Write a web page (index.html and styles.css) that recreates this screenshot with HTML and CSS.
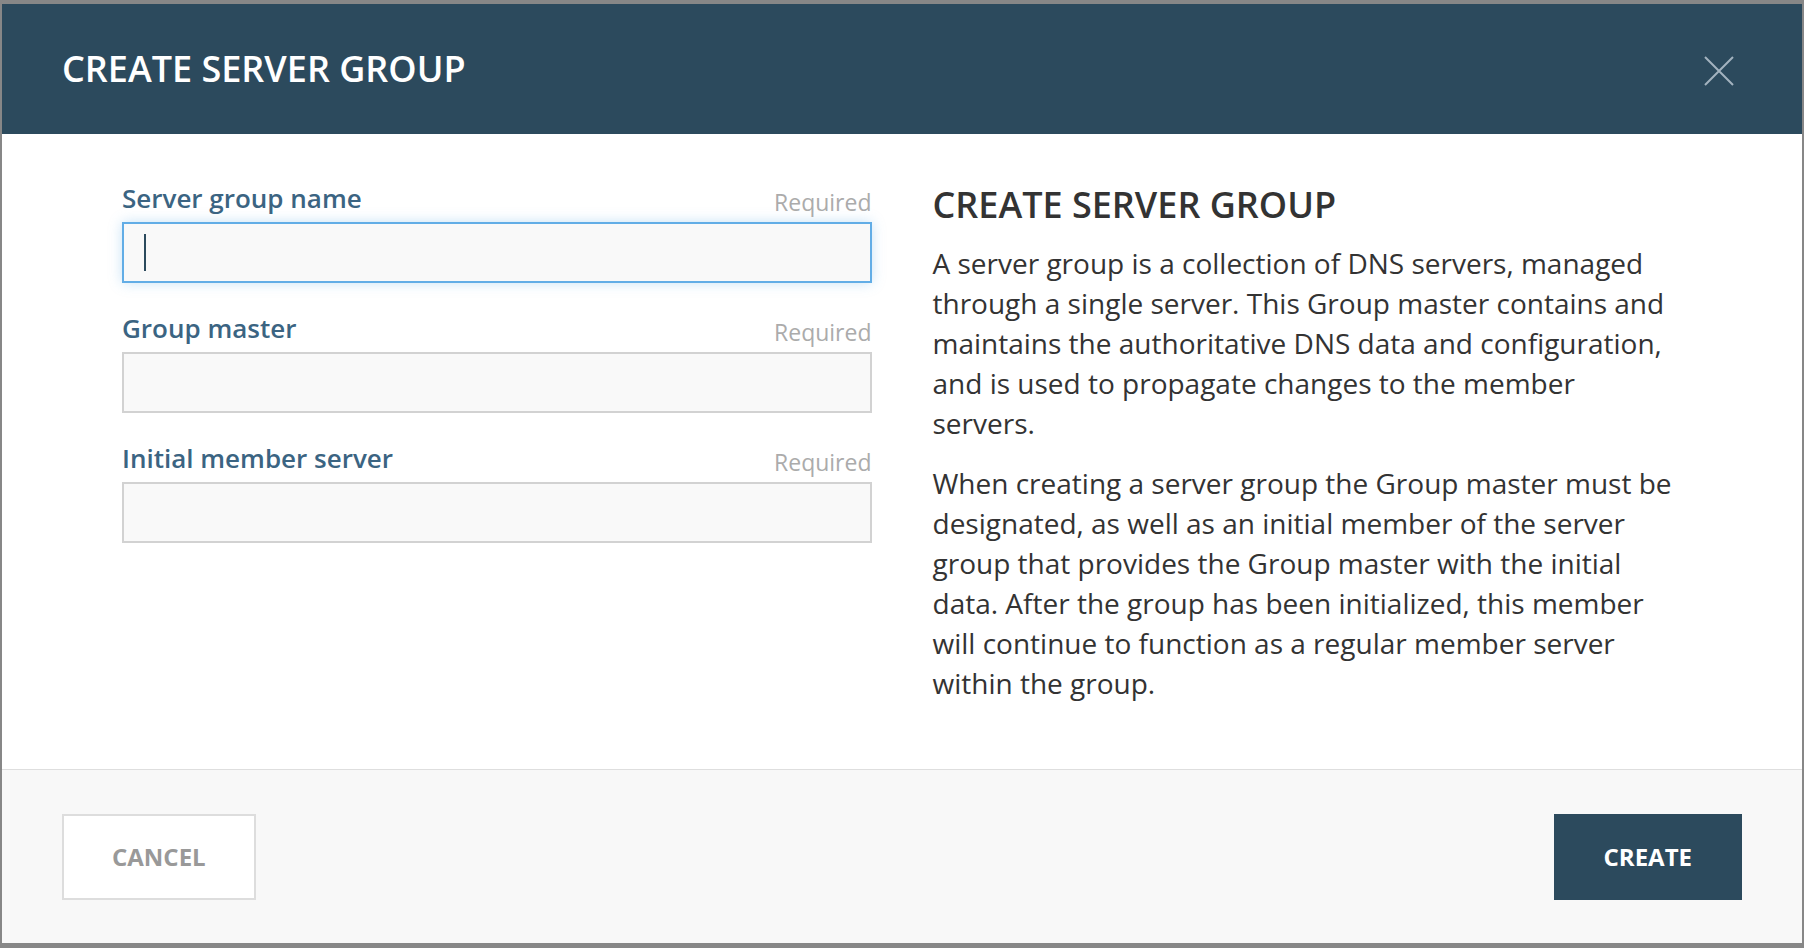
FILE: index.html
```html
<!DOCTYPE html>
<html lang="en">
<head>
<meta charset="utf-8">
<title>Create server group</title>
<link rel="stylesheet" href="styles.css">
</head>
<body>
<div class="modal">
  <header class="modal-header">
    <h1 class="modal-title">CREATE SERVER GROUP</h1>
    <button class="close-btn" aria-label="Close">
      <svg width="30" height="30" viewBox="0 0 30 30"><path d="M1 1 L29 29 M29 1 L1 29" stroke="#a3b3bf" stroke-width="2" fill="none"/></svg>
    </button>
  </header>
  <main class="modal-body">
    <form class="form-col">
      <div class="field">
        <div class="field-head"><label class="field-label">Server group name</label><span class="field-req">Required</span></div>
        <div class="field-input focused"><span class="caret"></span></div>
      </div>
      <div class="field">
        <div class="field-head"><label class="field-label">Group master</label><span class="field-req">Required</span></div>
        <div class="field-input"></div>
      </div>
      <div class="field">
        <div class="field-head"><label class="field-label">Initial member server</label><span class="field-req">Required</span></div>
        <div class="field-input"></div>
      </div>
    </form>
    <section class="help-col">
      <h2 class="help-title">CREATE SERVER GROUP</h2>
      <p class="help-text">A server group is a collection of DNS servers, managed through a single server. This Group master contains and maintains the authoritative DNS data and configuration, and is used to propagate changes to the member servers.</p>
      <p class="help-text">When creating a server group the Group master must be designated, as well as an initial member of the server group that provides the Group master with the initial data. After the group has been initialized, this member will continue to function as a regular member server within the group.</p>
    </section>
  </main>
  <footer class="modal-footer">
    <button class="btn btn-cancel">CANCEL</button>
    <button class="btn btn-create">CREATE</button>
  </footer>
</div>
</body>
</html>
```
FILE: styles.css
```css
html, body {
  margin: 0;
  padding: 0;
}
body {
  background: #878787;
  height: 948px;
  font-family: "Open Sans", "Noto Sans", sans-serif;
  overflow: hidden;
}
.modal {
  margin: 4px 2px 0 2px;
  height: 939px;
  background: #ffffff;
  display: flex;
  flex-direction: column;
}
.modal-header {
  height: 130px;
  flex: none;
  background: #2c4a5d;
  display: flex;
  align-items: center;
  justify-content: space-between;
  padding: 0 68px 0 60px;
}
.modal-title {
  margin: 0;
  color: #ffffff;
  font-size: 36px;
  font-weight: 600;
  line-height: 44px;
}
.close-btn {
  background: none;
  border: 0;
  padding: 0;
  margin-top: 4px;
  width: 30px;
  height: 30px;
  display: flex;
}
.modal-body {
  flex: 1;
  display: grid;
  grid-template-columns: 1fr 1fr;
  column-gap: 61px;
  padding: 46px 120px 0 120px;
  align-items: start;
}
.form-col {
  display: flex;
  flex-direction: column;
  gap: 27px;
}
.field-head {
  display: flex;
  justify-content: space-between;
  align-items: flex-end;
  height: 36px;
  margin-bottom: 6px;
}
.field-label {
  font-size: 26px;
  font-weight: 600;
  color: #3b6482;
  line-height: 36px;
}
.field-req {
  font-size: 23px;
  color: #ababab;
  line-height: 28px;
}
.field-input {
  box-sizing: border-box;
  height: 61px;
  border: 2px solid #d2d2d2;
  background: #f9f9f9;
  display: flex;
  align-items: center;
  padding-left: 20px;
}
.field-input.focused {
  border-color: #62ade6;
  box-shadow: 0 0 12px rgba(98, 173, 230, 0.35);
}
.caret {
  width: 2px;
  height: 37px;
  background: #2c4a5d;
}
.help-title {
  margin: 3px 0 16px 0;
  font-size: 36px;
  font-weight: 600;
  line-height: 44px;
  color: #333333;
}
.help-text {
  margin: 0 0 20px 0;
  font-size: 28px;
  line-height: 40px;
  color: #333333;
}
.modal-footer {
  height: 173px;
  flex: none;
  border-top: 1px solid #dedede;
  background: #f8f8f8;
  display: flex;
  align-items: center;
  justify-content: space-between;
  padding: 0 60px;
}
.btn {
  font-family: "Open Sans", "Noto Sans", sans-serif;
  font-size: 24px;
  font-weight: 700;
  height: 86px;
  padding: 0 48px;
  border: 2px solid transparent;
}
.btn-cancel {
  background: #ffffff;
  border-color: #dddddd;
  color: #999999;
}
.btn-create {
  background: #2c4a5d;
  border-color: #2c4a5d;
  color: #ffffff;
}
```
